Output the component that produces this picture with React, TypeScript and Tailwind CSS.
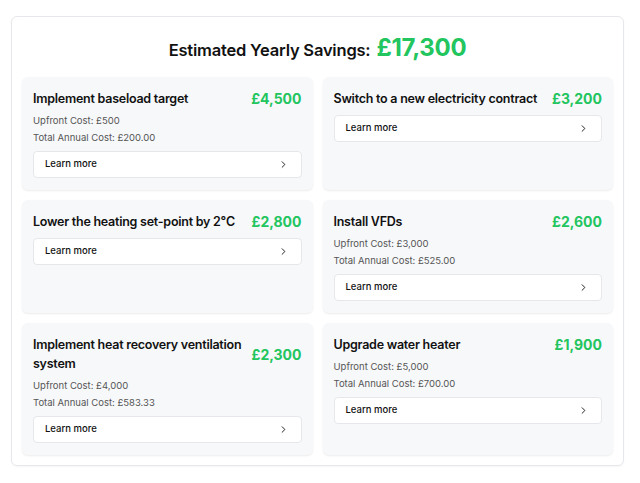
import { ChevronRight } from 'lucide-react'

interface Action {
  title: string
  saving: string
  upfront?: string
  annual?: string
}

const actions: Action[] = [
  { title: 'Implement baseload target', saving: '£4,500', upfront: '£500', annual: '£200.00' },
  { title: 'Switch to a new electricity contract', saving: '£3,200' },
  { title: 'Lower the heating set-point by 2°C', saving: '£2,800' },
  { title: 'Install VFDs', saving: '£2,600', upfront: '£3,000', annual: '£525.00' },
  { title: 'Implement heat recovery ventilation system', saving: '£2,300', upfront: '£4,000', annual: '£583.33' },
  { title: 'Upgrade water heater', saving: '£1,900', upfront: '£5,000', annual: '£700.00' },
]

function ActionCard({ action }: { action: Action }) {
  return (
    <div className="bg-[#f7f8fa] rounded-md shadow-[0_1px_2px_rgba(0,0,0,0.08)] px-[11px] pt-[12px] pb-[12px] flex flex-col">
      <div className="flex items-center justify-between gap-[4px]">
        <h3 className="flex-1 min-w-0 text-[12.5px] leading-[19px] font-semibold text-[#111] tracking-[-0.25px]">{action.title}</h3>
        <span className="shrink-0 text-[14px] leading-[19px] font-bold text-[#22c55e] whitespace-nowrap">{action.saving}</span>
      </div>
      {action.upfront && (
        <div className="mt-[4px] text-[9.5px] leading-[17px] text-[#555]">
          <p>Upfront Cost: {action.upfront}</p>
          <p>Total Annual Cost: {action.annual}</p>
        </div>
      )}
      <button className={`${action.upfront ? 'mt-[5px]' : 'mt-[7px]'} h-[27px] w-full bg-white border border-[#e5e7eb] rounded-[4px] flex items-center justify-between pl-[11px] pr-[12px] text-[9.5px] font-medium text-[#111]`}>
        Learn more
        <ChevronRight className="w-[11px] h-[11px]" strokeWidth={2} />
      </button>
    </div>
  )
}

export default function App() {
  return (
    <div className="w-[640px] h-[483px] bg-white pt-[16px] pl-[11px]" style={{ fontFamily: 'Inter, "Noto Sans", sans-serif' }}>
      <div className="w-[613px] border border-[#e5e7eb] rounded-md px-[10px] pt-[15px] pb-[10px] shadow-[0_1px_2px_rgba(0,0,0,0.04)]">
        <div className="flex items-baseline justify-center gap-[6px] h-[32px]">
          <h1 className="text-[16.5px] leading-[32px] font-semibold text-[#111] tracking-[-0.2px]">Estimated Yearly Savings:</h1>
          <span className="text-[24px] leading-[32px] font-bold text-[#22c55e] tracking-[-0.3px]">£17,300</span>
        </div>
        <div className="mt-[13px] grid grid-cols-2 gap-[10px]">
          {actions.map((a) => (
            <ActionCard key={a.title} action={a} />
          ))}
        </div>
      </div>
    </div>
  )
}
